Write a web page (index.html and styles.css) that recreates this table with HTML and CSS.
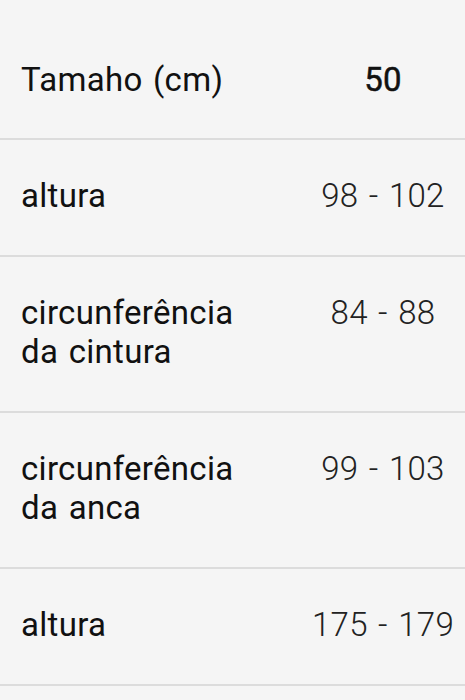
FILE: index.html
```html
<!DOCTYPE html>
<html>
<head>
  <title>Tabela de tamanhos</title>
  <link rel="stylesheet" href="styles.css">
</head>
<body>

  <div class="size-table">
    <div class="size-row head">
      <div class="label">Tamaho (cm)</div>
      <div class="value">50</div>
    </div>
    <div class="size-row">
      <div class="label">altura</div>
      <div class="value">98 - 102</div>
    </div>
    <div class="size-row">
      <div class="label">circunferência da cintura</div>
      <div class="value">84 - 88</div>
    </div>
    <div class="size-row">
      <div class="label">circunferência da anca</div>
      <div class="value">99 - 103</div>
    </div>
    <div class="size-row">
      <div class="label">altura</div>
      <div class="value">175 - 179</div>
    </div>
  </div>

</body>
</html>
```

FILE: styles.css
```css
body {
  margin: 0;
  background: #f5f5f5;
  font-family: Roboto, "Liberation Sans", sans-serif;
  font-size: 33px;
  letter-spacing: 0.3px;
  word-spacing: 2px;
  color: #111;
}

.size-row {
  display: grid;
  grid-template-columns: 1fr 164px;
  align-items: start;
  padding: 36px 0 40px 21px;
  border-bottom: 2px solid #dcdcdc;
}

.size-row.head {
  padding-top: 60px;
  padding-bottom: 39px;
}

.label {
  width: 250px;
}

.value {
  text-align: center;
  font-weight: 300;
  color: #222;
}

.head .value {
  font-weight: 400;
  -webkit-text-stroke: 0.5px #111;
  color: #111;
}
```
